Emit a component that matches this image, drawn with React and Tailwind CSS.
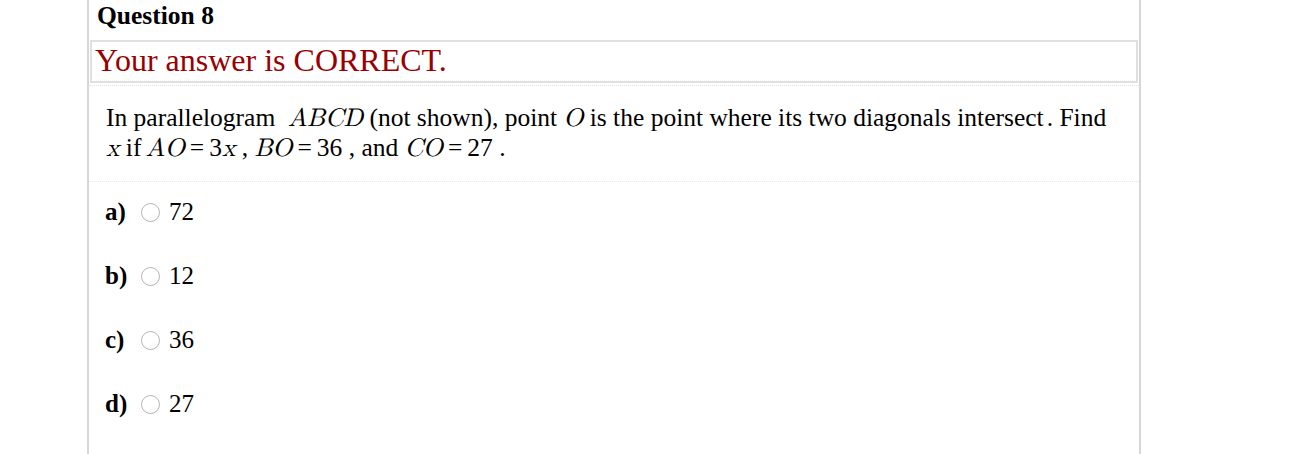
import React from 'react';

const options = [
  { label: 'a)', value: '72' },
  { label: 'b)', value: '12' },
  { label: 'c)', value: '36' },
  { label: 'd)', value: '27' },
];

const M = ({ children }) => (
  <span className="italic font-['Latin_Modern_Math','Liberation_Serif',serif]">{children}</span>
);

const Eq = () => <span className="mx-[5px]">=</span>;

export default function App() {
  return (
    <div className="h-[454px] overflow-hidden bg-white font-['Liberation_Serif',serif] text-black">
      <div className="ml-[87px] w-[1054px] h-full border-x-2 border-[#d6d6d6]">
        {/* Header */}
        <div className="pl-[8px] pt-[1px] h-[40px] text-[25.5px] font-bold leading-[30px]">Question 8</div>

        {/* Result */}
        <div className="mx-[1px] h-[43px] border-2 border-[#e0e0e0] pl-[3px] text-[32px] leading-[36px] text-[#990000]">
          Your answer is CORRECT.
        </div>
        <div className="mt-[2px] border-t border-dotted border-[#e2e2e2]" />

        {/* Question */}
        <div className="pl-[17px] pt-[17px] pb-[18px] text-[25.5px] leading-[30px]">
          <p>
            In parallelogram&nbsp; <M>ABCD</M> (not shown), point <M>O</M> is the point where its two diagonals intersect<span className="ml-[3px]">.</span> Find
          </p>
          <p>
            <M>x</M> if<span className="ml-[-2px]"> </span><M>AO</M><Eq />3<M>x</M> , <M>BO</M><Eq />36 , and <M>CO</M><Eq />27 .
          </p>
        </div>
        <div className="border-t border-dotted border-[#e8e8e8]" />

        {/* Options */}
        <div className="pl-[16px] pt-[15px] flex flex-col gap-[34px]">
          {options.map((o) => (
            <div key={o.label} className="flex items-center h-[30px] text-[25px]">
              <span className="w-[36px] font-bold">{o.label}</span>
              <span className="w-[19px] h-[19px] rounded-full border border-[#b5b5b5] bg-white" />
              <span className="ml-[9px]">{o.value}</span>
            </div>
          ))}
        </div>
      </div>
    </div>
  );
}
